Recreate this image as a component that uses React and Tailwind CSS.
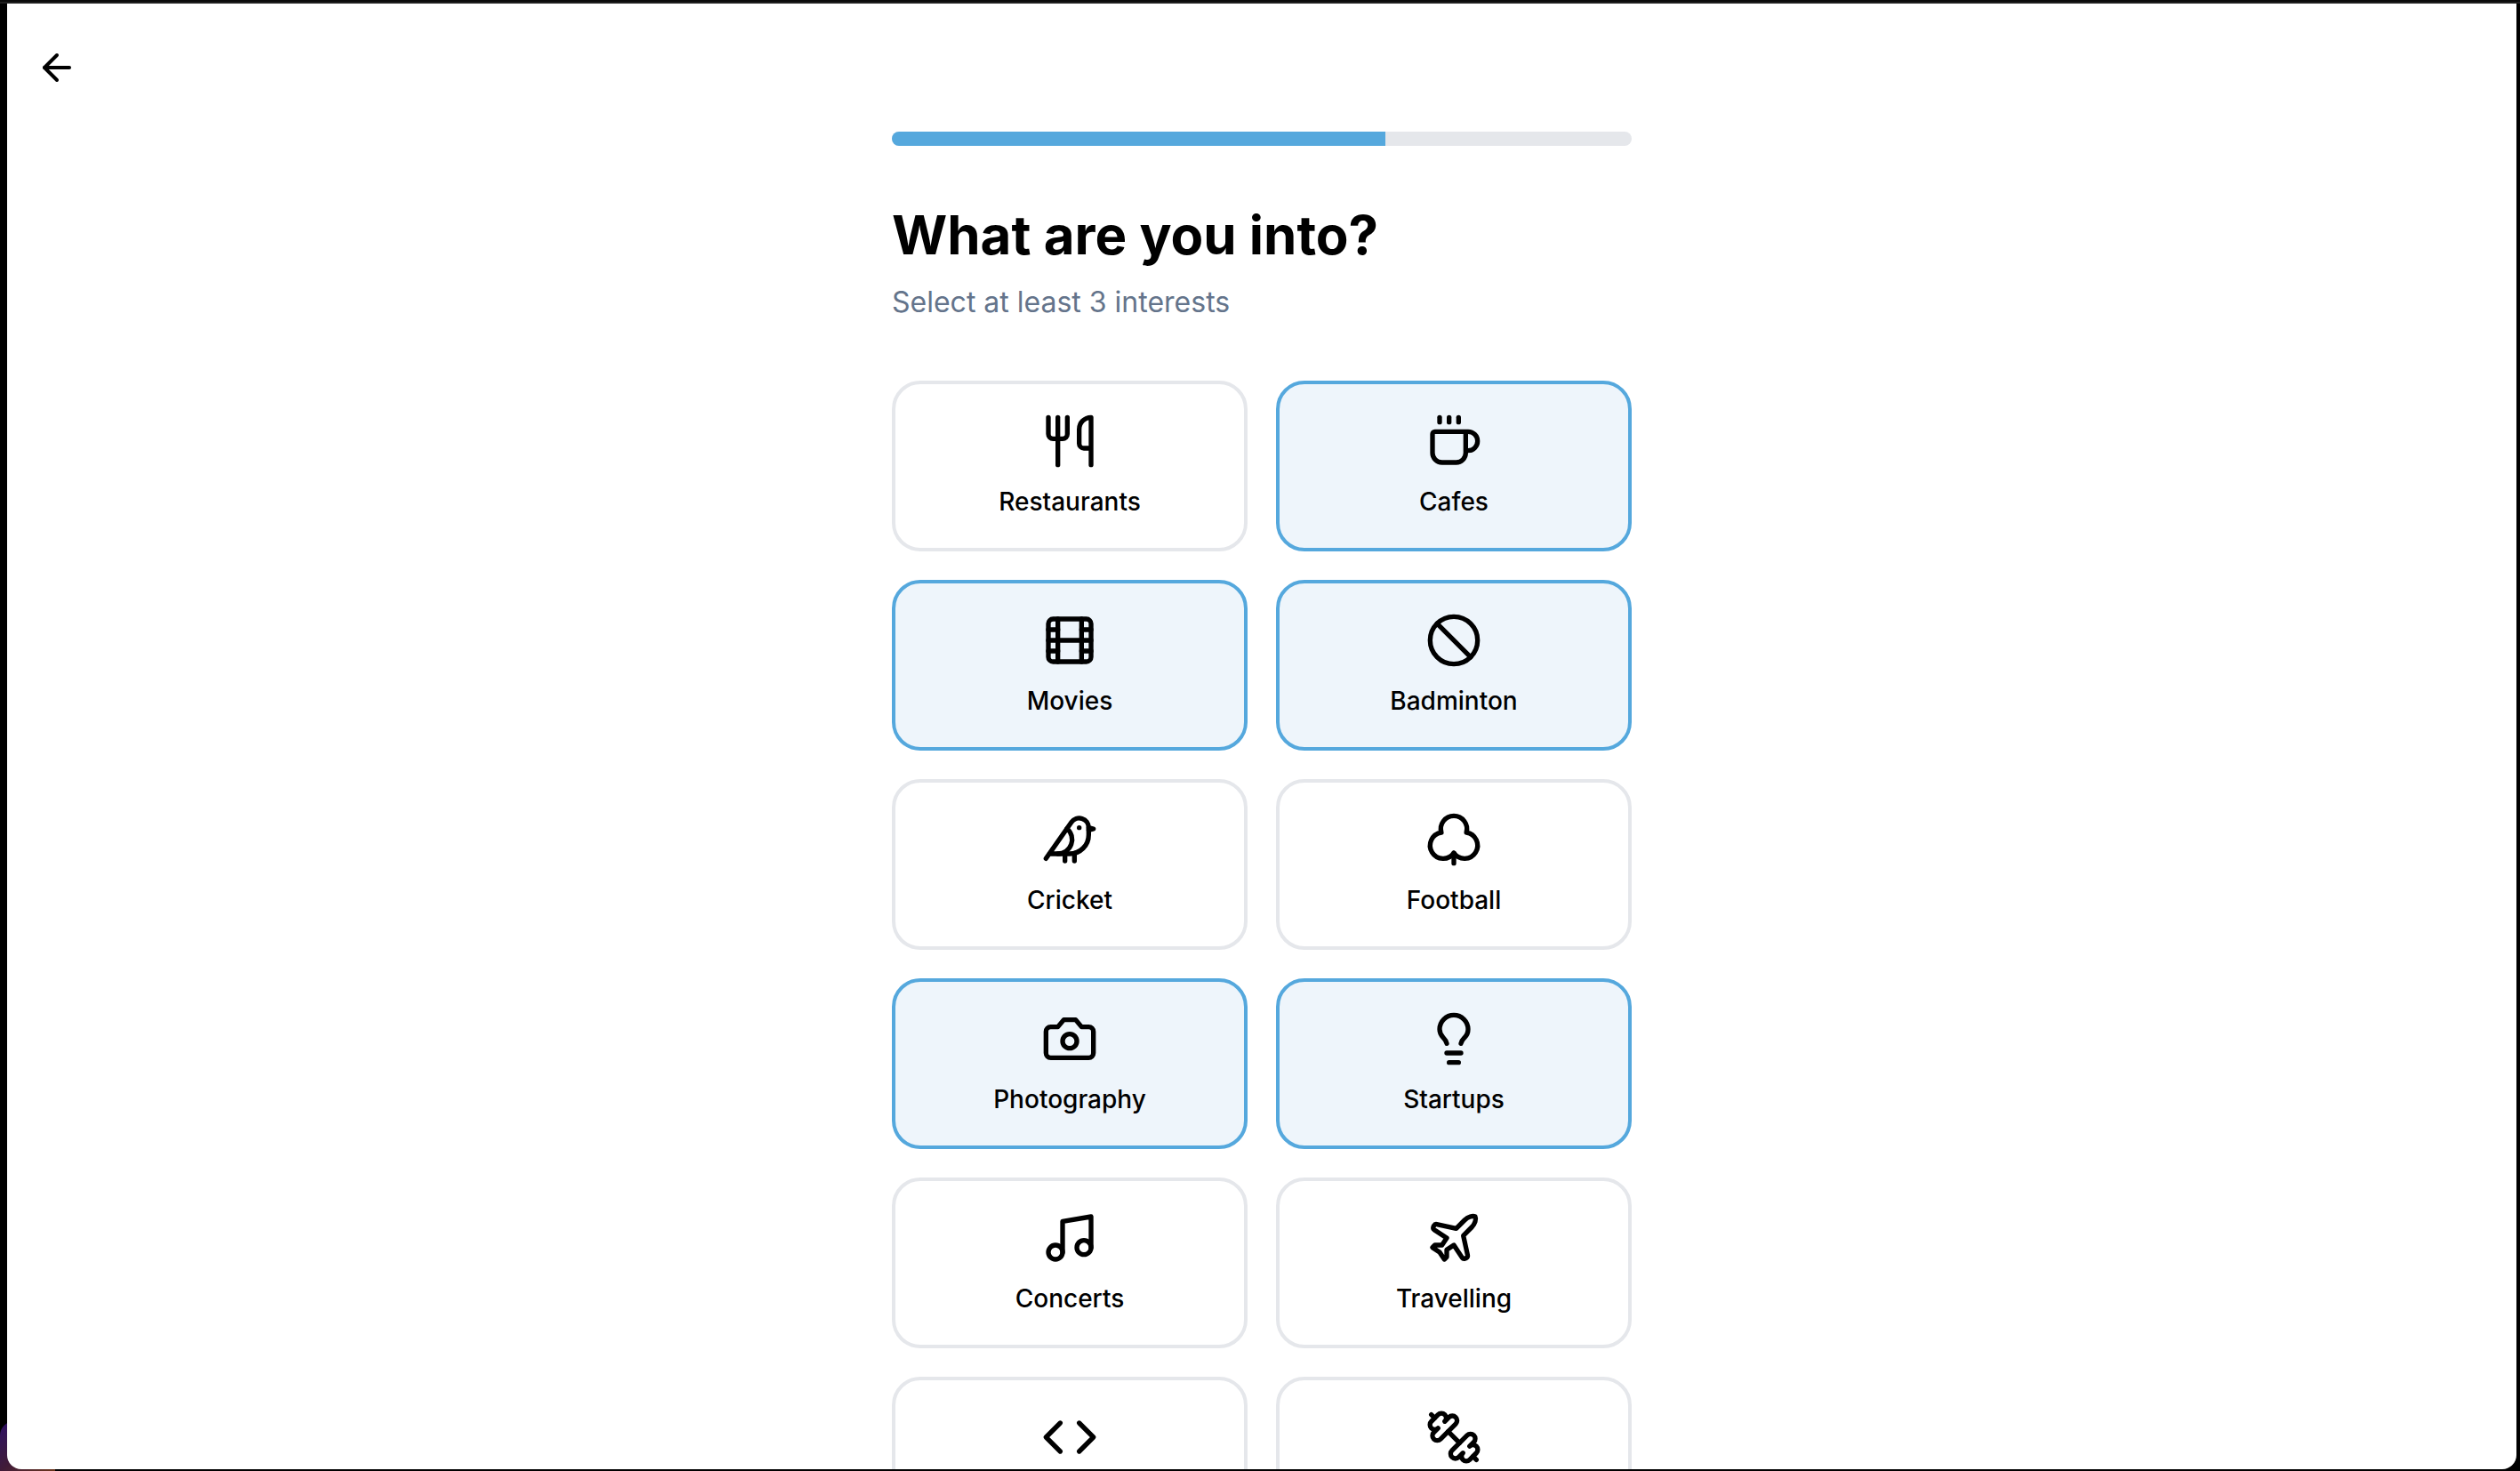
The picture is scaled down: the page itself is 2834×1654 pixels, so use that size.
import { useState } from "react";
import {
  ArrowLeft,
  Utensils,
  Coffee,
  Film,
  Ban,
  Bird,
  Club,
  Lightbulb,
  Music,
  Plane,
  Code,
} from "lucide-react";

function StrokeIcon({ className, strokeWidth, children }) {
  return (
    <svg
      viewBox="0 0 24 24"
      fill="none"
      stroke="currentColor"
      strokeWidth={strokeWidth}
      strokeLinecap="round"
      strokeLinejoin="round"
      className={className}
      aria-hidden="true"
    >
      {children}
    </svg>
  );
}

function Camera(props) {
  return (
    <StrokeIcon {...props}>
      <path d="M14.5 4h-5L7 7H4a2 2 0 0 0-2 2v9a2 2 0 0 0 2 2h16a2 2 0 0 0 2-2V9a2 2 0 0 0-2-2h-3l-2.5-3z" />
      <circle cx="12" cy="13" r="3" />
    </StrokeIcon>
  );
}

function Dumbbell(props) {
  return (
    <StrokeIcon {...props}>
      <path d="M14.4 14.4 9.6 9.6" />
      <path d="M18.657 21.485a2 2 0 1 1-2.829-2.828l-1.767 1.768a2 2 0 1 1-2.829-2.829l6.364-6.364a2 2 0 1 1 2.829 2.829l-1.768 1.767a2 2 0 1 1 2.828 2.829z" />
      <path d="m21.5 21.5-1.4-1.4" />
      <path d="M3.9 3.9 2.5 2.5" />
      <path d="M6.404 12.768a2 2 0 1 1-2.829-2.829l1.768-1.767a2 2 0 1 1-2.828-2.829l2.828-2.828a2 2 0 1 1 2.829 2.828l1.767-1.768a2 2 0 1 1 2.829 2.829z" />
    </StrokeIcon>
  );
}

const INTERESTS = [
  { name: "Restaurants", icon: Utensils },
  { name: "Cafes", icon: Coffee },
  { name: "Movies", icon: Film },
  { name: "Badminton", icon: Ban },
  { name: "Cricket", icon: Bird },
  { name: "Football", icon: Club },
  { name: "Photography", icon: Camera },
  { name: "Startups", icon: Lightbulb },
  { name: "Concerts", icon: Music },
  { name: "Travelling", icon: Plane },
  { name: "Coding", icon: Code, iconOnly: true },
  { name: "Gym", icon: Dumbbell, iconOnly: true },
];

function InterestCard({ name, icon: Icon, iconOnly, selected, onToggle }) {
  return (
    <button
      type="button"
      aria-label={iconOnly ? name : undefined}
      aria-pressed={selected}
      onClick={onToggle}
      className={
        "flex min-h-48 flex-col items-center gap-4 rounded-[32px] border-4 p-8 " +
        (selected ? "border-[#55a8dd] bg-[#eef5fb]" : "border-[#e5e7eb] bg-white")
      }
    >
      <Icon className="size-16" strokeWidth={2} aria-hidden="true" />
      {!iconOnly && <span className="text-[28px] leading-10 font-medium">{name}</span>}
    </button>
  );
}

export default function App() {
  const [selected, setSelected] = useState([
    "Cafes",
    "Movies",
    "Badminton",
    "Photography",
    "Startups",
  ]);

  const toggle = (name) =>
    setSelected((list) =>
      list.includes(name) ? list.filter((n) => n !== name) : [...list, name]
    );

  return (
    <div className="relative flex h-screen flex-col bg-black pr-1 pb-0.5 pl-2 font-['Inter',sans-serif] text-black">
      <div className="absolute bottom-0 left-0 h-14 w-[62px] rounded-tl-2xl bg-linear-to-br from-[#2e0a66] via-[#401a38] to-[#6b3519]" />
      <div className="-mr-1 -ml-2 h-1 shrink-0 border-b-2 border-[#1f1f1f] bg-[#0a0a0a]" />
      <div className="relative min-h-0 flex-1 overflow-hidden rounded-b-2xl bg-white">
        <header className="flex px-8 py-12">
          <button type="button" aria-label="Back">
            <ArrowLeft className="size-12" strokeWidth={2} aria-hidden="true" />
          </button>
        </header>
        <main className="mx-auto w-full max-w-[832px]">
          <div
            role="progressbar"
            aria-label="Onboarding progress"
            aria-valuenow={4}
            aria-valuemin={0}
            aria-valuemax={6}
            className="h-4 overflow-hidden rounded-full bg-[#e5e7eb]"
          >
            <div className="h-full w-2/3 bg-[#55a8dd]" />
          </div>
          <h1 className="mt-16 text-[60px] leading-[72px] font-bold">What are you into?</h1>
          <p className="mt-4 text-[32px] leading-[48px] text-[#64748b]">Select at least 3 interests</p>
          <div className="mt-16 grid grid-cols-2 gap-8 pb-16">
            {INTERESTS.map((item) => (
              <InterestCard
                key={item.name}
                name={item.name}
                icon={item.icon}
                iconOnly={item.iconOnly}
                selected={selected.includes(item.name)}
                onToggle={() => toggle(item.name)}
              />
            ))}
          </div>
        </main>
      </div>
    </div>
  );
}
